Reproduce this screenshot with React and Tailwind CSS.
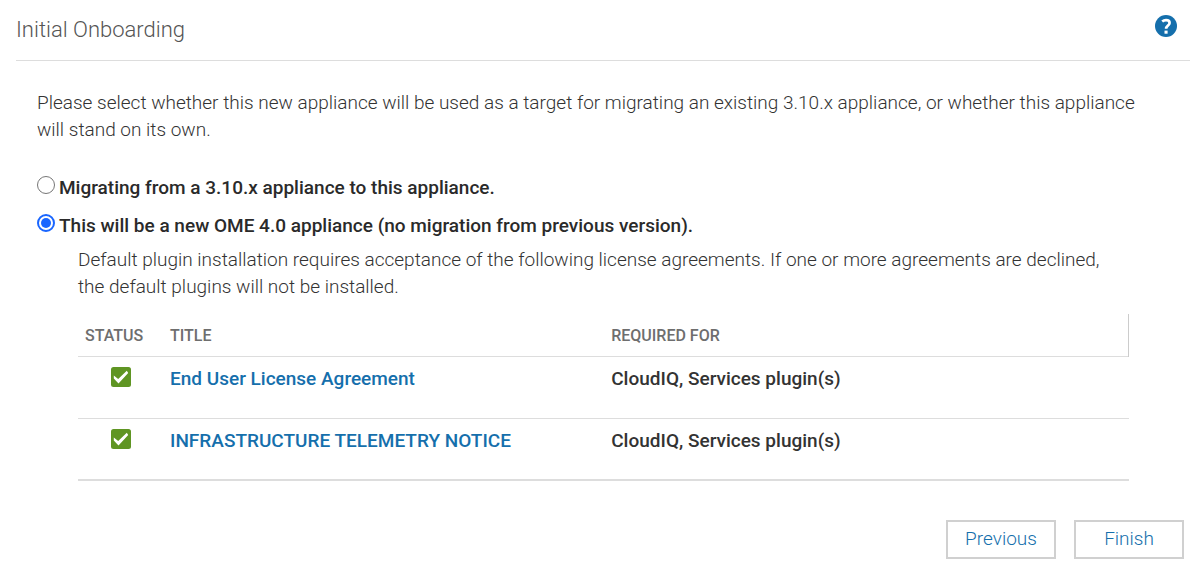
const body = "text-[19px] leading-[27px] font-light";

function HelpIcon() {
  return (
    <svg viewBox="0 0 22 22" className="size-[22px]" aria-hidden="true">
      <circle cx="11" cy="11" r="11" fill="#156fac" />
      <path d="M7.2 6.5C8.4 5.5 9.6 5.1 11 5.1c2.2 0 3.6 1 3.6 2.8 0 2.7-3.5 2.6-3.5 5.9" fill="none" stroke="#fff" strokeWidth="2.7" />
      <rect x="9.5" y="15.6" width="3.1" height="3.1" fill="#fff" />
    </svg>
  );
}

function Check() {
  return (
    <svg viewBox="0 0 20 20" className="mx-auto size-5" role="img" aria-label="Accepted">
      <rect width="20" height="20" rx="2.5" fill="#5f9523" />
      <path d="M2.8 8.5L7.2 12 15.8 3.8 17.2 6 7.5 16.4 2.8 11.6Z" fill="#fff" />
    </svg>
  );
}

function Option({ id, children, checked }) {
  return (
    <div className="flex items-start gap-1">
      <input
        type="radio"
        name="mode"
        id={id}
        defaultChecked={checked}
        className="mt-[2px] size-[18px] shrink-0 appearance-none rounded-full border border-[#767676] bg-white checked:border-2 checked:border-[#1a66ff] checked:bg-[#1a66ff] checked:bg-clip-content checked:p-[2px]"
      />
      <label htmlFor={id} className="text-[19px] leading-[27px] font-medium text-[#2a2a2a]">{children}</label>
    </div>
  );
}

const agreements = ["End User License Agreement", "INFRASTRUCTURE TELEMETRY NOTICE"];

export default function App() {
  return (
    <main className="bg-white font-['Roboto',sans-serif] text-[#333]">
      <header className="ml-4 mr-[10px] flex h-[61px] items-center justify-between border-b border-[#ddd] pr-[13px]">
        <h1 className="text-[22px] leading-7 font-light text-[#555]">Initial Onboarding</h1>
        <button type="button" aria-label="Help" className="mb-2"><HelpIcon /></button>
      </header>
      <section className="pl-[37px] pr-[50px] pt-7">
        <p className={body}>
          Please select whether this new appliance will be used as a target for migrating an existing 3.10.x appliance, or whether this appliance will stand on its own.
        </p>
        <div className="mt-[31px] flex flex-col gap-[11px]">
          <Option id="migrate">Migrating from a 3.10.x appliance to this appliance.</Option>
          <Option id="fresh" checked>This will be a new OME 4.0 appliance (no migration from previous version).</Option>
        </div>
        <div className="ml-[41px] mr-[21px] mt-[7px]">
          <p className={body}>
            Default plugin installation requires acceptance of the following license agreements. If one or more agreements are declined, the default plugins will not be installed.
          </p>
          <table className="mt-[14px] w-full table-fixed border-collapse text-left">
            <colgroup>
              <col className="w-[85px]" />
              <col className="w-[42%]" />
              <col />
            </colgroup>
            <thead>
              <tr className="h-[42px] border-b border-[#ddd] text-base text-[#6e6e6e]">
                <th className="pl-[7px] pt-[2px] font-medium">STATUS</th>
                <th className="pl-[7px] pt-[2px] font-medium">TITLE</th>
                <th className="border-r border-[#ccc] pl-[7px] pt-[2px] font-medium">REQUIRED FOR</th>
              </tr>
            </thead>
            <tbody className="text-[19px] leading-[27px] font-medium">
              {agreements.map((title) => (
                <tr key={title} className="h-[62px] border-b border-[#ddd] align-top last:border-b-2">
                  <td className="pt-[10px]"><Check /></td>
                  <td className="pl-[7px] pt-2"><a href="#agreement" className="text-[#156fac]">{title}</a></td>
                  <td className="pl-[7px] pt-2">CloudIQ, Services plugin(s)</td>
                </tr>
              ))}
            </tbody>
          </table>
        </div>
      </section>
      <footer className="mt-[39px] flex justify-end gap-[18px] pr-4 text-[19px] font-light text-[#156fac]">
        <button type="button" className="h-[39px] w-[110px] border-2 border-[#d0d0d0]">Previous</button>
        <button type="button" className="h-[39px] w-[110px] border-2 border-[#d0d0d0]">Finish</button>
      </footer>
    </main>
  );
}
